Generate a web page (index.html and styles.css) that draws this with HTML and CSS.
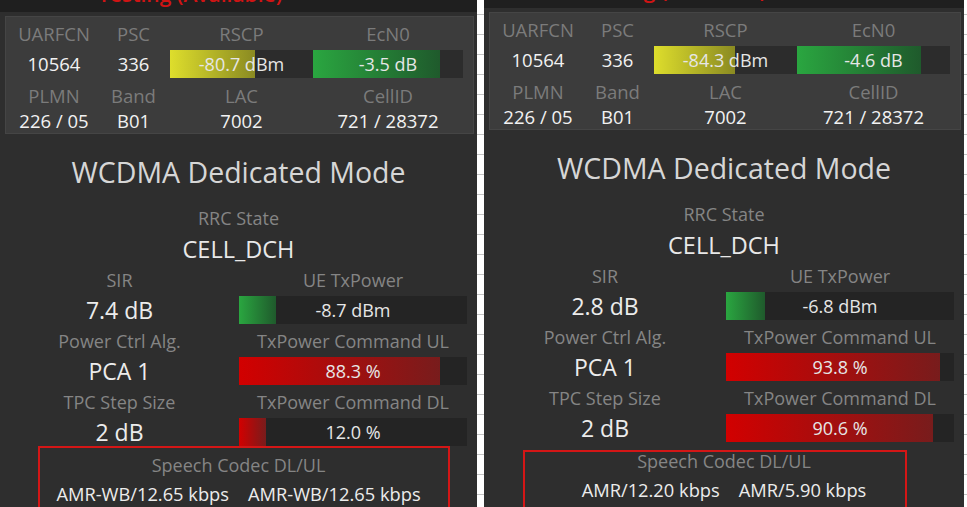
FILE: index.html
```html
<!DOCTYPE html>
<html lang="en">
<head>
<meta charset="utf-8">
<title>WCDMA Dedicated Mode</title>
<link rel="stylesheet" href="styles.css">
</head>
<body>
<div class="sheet">
  <section class="panel panel--left">
    <div class="topbar"><span class="status">Testing (Available)</span></div>
    <div class="card">
      <div class="c-label">UARFCN</div>
      <div class="c-label">PSC</div>
      <div class="c-label">RSCP</div>
      <div class="c-label">EcN0</div>
      <div class="c-value">10564</div>
      <div class="c-value">336</div>
      <div class="bar bar--card"><div class="fill fill--yellow" style="width:59.5%"></div><span class="bar-text">-80.7 dBm</span></div>
      <div class="bar bar--card"><div class="fill fill--green" style="width:84.4%"></div><span class="bar-text">-3.5 dB</span></div>
      <div class="c-label">PLMN</div>
      <div class="c-label">Band</div>
      <div class="c-label">LAC</div>
      <div class="c-label">CellID</div>
      <div class="c-value c-value--low">226 / 05</div>
      <div class="c-value c-value--low">B01</div>
      <div class="c-value c-value--low">7002</div>
      <div class="c-value c-value--low">721 / 28372</div>
    </div>
    <h1 class="title">WCDMA Dedicated Mode</h1>
    <div class="label">RRC State</div>
    <div class="state">CELL_DCH</div>
    <div class="metrics">
      <div class="label">SIR</div>
      <div class="label">UE TxPower</div>
      <div class="m-value">7.4 dB</div>
      <div class="bar"><div class="fill fill--green" style="width:16.2%"></div><span class="bar-text">-8.7 dBm</span></div>
      <div class="label">Power Ctrl Alg.</div>
      <div class="label">TxPower Command UL</div>
      <div class="m-value">PCA 1</div>
      <div class="bar"><div class="fill fill--red" style="width:88.3%"></div><span class="bar-text">88.3 %</span></div>
      <div class="label">TPC Step Size</div>
      <div class="label">TxPower Command DL</div>
      <div class="m-value">2 dB</div>
      <div class="bar"><div class="fill fill--red" style="width:12%"></div><span class="bar-text">12.0 %</span></div>
    </div>
    <div class="codec">
      <div class="label">Speech Codec DL/UL</div>
      <div class="codec-values"><span>AMR-WB/12.65 kbps</span><span>AMR-WB/12.65 kbps</span></div>
    </div>
    <div class="annot annot--left"></div>
  </section>

  <section class="panel panel--right">
    <div class="topbar"><span class="status">Testing (Available)</span></div>
    <div class="card">
      <div class="c-label">UARFCN</div>
      <div class="c-label">PSC</div>
      <div class="c-label">RSCP</div>
      <div class="c-label">EcN0</div>
      <div class="c-value">10564</div>
      <div class="c-value">336</div>
      <div class="bar bar--card"><div class="fill fill--yellow" style="width:56.7%"></div><span class="bar-text">-84.3 dBm</span></div>
      <div class="bar bar--card"><div class="fill fill--green" style="width:81%"></div><span class="bar-text">-4.6 dB</span></div>
      <div class="c-label">PLMN</div>
      <div class="c-label">Band</div>
      <div class="c-label">LAC</div>
      <div class="c-label">CellID</div>
      <div class="c-value c-value--low">226 / 05</div>
      <div class="c-value c-value--low">B01</div>
      <div class="c-value c-value--low">7002</div>
      <div class="c-value c-value--low">721 / 28372</div>
    </div>
    <h1 class="title">WCDMA Dedicated Mode</h1>
    <div class="label">RRC State</div>
    <div class="state">CELL_DCH</div>
    <div class="metrics">
      <div class="label">SIR</div>
      <div class="label">UE TxPower</div>
      <div class="m-value">2.8 dB</div>
      <div class="bar"><div class="fill fill--green" style="width:17.1%"></div><span class="bar-text">-6.8 dBm</span></div>
      <div class="label">Power Ctrl Alg.</div>
      <div class="label">TxPower Command UL</div>
      <div class="m-value">PCA 1</div>
      <div class="bar"><div class="fill fill--red" style="width:93.8%"></div><span class="bar-text">93.8 %</span></div>
      <div class="label">TPC Step Size</div>
      <div class="label">TxPower Command DL</div>
      <div class="m-value">2 dB</div>
      <div class="bar"><div class="fill fill--red" style="width:90.6%"></div><span class="bar-text">90.6 %</span></div>
    </div>
    <div class="codec">
      <div class="label">Speech Codec DL/UL</div>
      <div class="codec-values"><span>AMR/12.20 kbps</span><span>AMR/5.90 kbps</span></div>
    </div>
    <div class="annot annot--right"></div>
  </section>
</div>
</body>
</html>
```

FILE: styles.css
```css
* { box-sizing: border-box; }

html, body {
  margin: 0;
  padding: 0;
}

body {
  width: 967px;
  height: 507px;
  overflow: hidden;
  background-color: #ffffff;
  background-image: repeating-linear-gradient(to bottom, transparent 0, transparent 14px, #c4c4c4 14px, #c4c4c4 15px, transparent 15px, transparent 20px);
  font-family: "Open Sans", "Noto Sans", sans-serif;
}

.sheet {
  display: flex;
  gap: 7px;
  height: 507px;
}

.panel {
  position: relative;
  height: 507px;
  overflow: hidden;
  background: #2e2e2e;
  display: flex;
  flex-direction: column;
}

.panel--left { width: 477px; }
.panel--right { width: 480px; }

.topbar {
  background: #1f1f1f;
  height: 12px;
  margin-bottom: 4px;
  overflow: hidden;
  padding-left: 98px;
  flex: none;
}
.panel--right .topbar { height: 8px; }

.status {
  display: block;
  margin-top: -16px;
  color: #d01414;
  font-size: 21px;
  line-height: 20px;
  font-weight: 600;
  white-space: nowrap;
}
.panel--right .status { margin-top: -20px; }

/* top card */
.card {
  margin: 0 3px 0 5px;
  background: #3c3c3c;
  border: 1px solid #454545;
  padding: 7px 10px 2px 5px;
  display: grid;
  grid-template-columns: 86px 73px 143px 1fr;
  grid-template-rows: 26px 36px 25px 20px;
  flex: none;
}

.card > .bar--card:last-of-type { margin-left: 4px; }

.c-label {
  color: #7b7b7b;
  font-size: 18.5px;
  line-height: 20px;
  text-align: center;
  white-space: nowrap;
}

.c-value {
  color: #f2f2f2;
  font-size: 18.5px;
  line-height: 28px;
  text-align: center;
  white-space: nowrap;
}

.c-value--low { line-height: 20px; }

.bar {
  position: relative;
  height: 28px;
  background: #242424;
  overflow: hidden;
}
.bar--card { background: #2c2c2c; }

.fill {
  height: 100%;
}
.fill--yellow { background: linear-gradient(to right, #dede2c, #8a8a22); }
.fill--green { background: linear-gradient(to right, #2aa640, #1f5a2c); }
.fill--red { background: linear-gradient(to right, #d20000, #781c1c); }

.bar-text {
  position: absolute;
  inset: 0;
  text-align: center;
  color: #e6e6e6;
  font-size: 18px;
  line-height: 28px;
  white-space: nowrap;
}

/* main section */
.title {
  margin: 21px 0 0;
  font-weight: 400;
  font-size: 28.5px;
  line-height: 34px;
  color: #d6d6d6;
  text-align: center;
  white-space: nowrap;
}

.label {
  color: #858585;
  font-size: 18px;
  line-height: 20px;
  text-align: center;
  white-space: nowrap;
}

.title + .label { margin-top: 19px; }

.state {
  margin-top: 6px;
  color: #e8e8e8;
  font-size: 23.5px;
  line-height: 30px;
  text-align: center;
}

.metrics {
  margin-top: 6px;
  display: grid;
  grid-template-columns: 1fr 228px;
  grid-template-rows: 26px 35px 26px 35px 26px 28px;
  padding-right: 10px;
}

.metrics .label { align-self: start; }
.metrics .bar { align-self: start; }

.m-value {
  color: #ececec;
  font-size: 23px;
  line-height: 28px;
  text-align: center;
  align-self: start;
}

.codec {
  margin-top: 9px;
}

.codec-values {
  margin-top: 4px;
  display: flex;
  justify-content: center;
  gap: 19px;
  color: #ececec;
  font-size: 18.3px;
  line-height: 30px;
  white-space: nowrap;
}

/* red annotation boxes drawn over the screenshot */
.annot {
  position: absolute;
  border: 2px solid #d41616;
  height: 90px;
}
.annot--left { left: 38px; top: 446px; width: 412px; }
.annot--right { left: 39px; top: 450px; width: 384px; }
```
